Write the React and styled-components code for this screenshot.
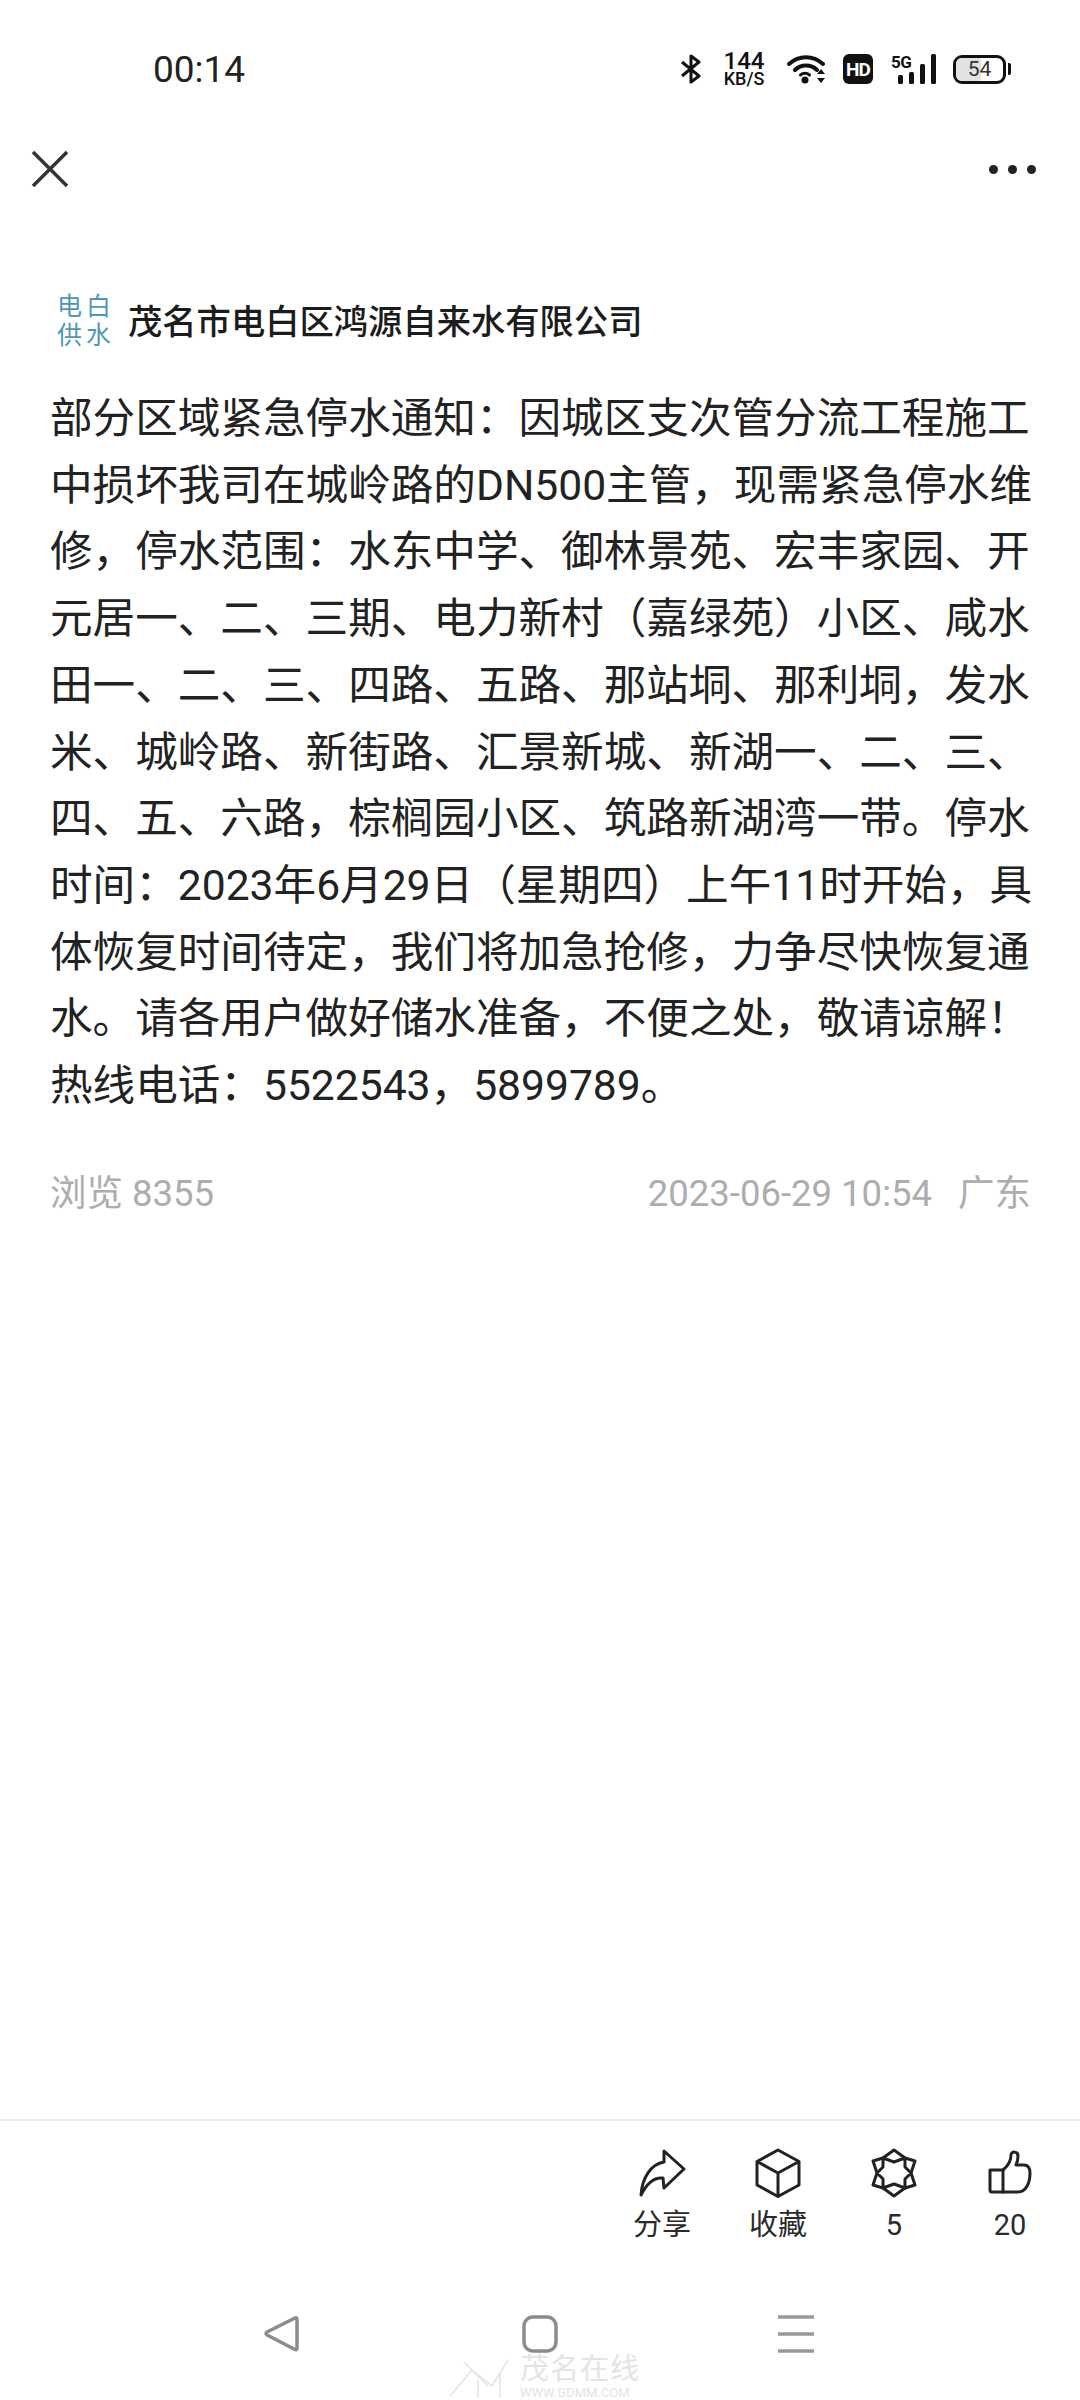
import React from 'react';
import styled, { createGlobalStyle } from 'styled-components';

const GlobalStyle = createGlobalStyle`
  html, body {
    margin: 0;
    padding: 0;
    background: #fff;
  }
  body {
    font-family: Roboto, "Noto Sans CJK SC", sans-serif;
  }
`;

const Page = styled.div`
  width: 1080px;
  height: 2400px;
  display: flex;
  flex-direction: column;
  position: relative;
  overflow: hidden;
  background: #fff;
  color: #222;
`;

const StatusBar = styled.div`
  height: 136px;
  padding: 2px 69px 0 153px;
  display: flex;
  align-items: center;
  justify-content: space-between;
  box-sizing: border-box;
`;

const Clock = styled.span`
  font-size: 37px;
  color: #222;
`;

const StatusIcons = styled.div`
  display: flex;
  align-items: center;
`;

const Speed = styled.div`
  width: 42px;
  margin: 0 22px 0 21px;
  display: flex;
  flex-direction: column;
  align-items: center;
  font-weight: 500;
  color: #111;
`;

const SpeedValue = styled.span`
  font-size: 24px;
  line-height: 20px;
`;

const SpeedUnit = styled.span`
  font-size: 18px;
  line-height: 16px;
  white-space: nowrap;
`;

const HdBadge = styled.span`
  width: 30px;
  height: 30px;
  margin: 0 18px 0 16px;
  border-radius: 6px;
  background: #111;
  color: #fff;
  font-size: 19px;
  font-weight: 700;
  letter-spacing: -1px;
  display: flex;
  align-items: center;
  justify-content: center;
`;

const Signal = styled.div`
  width: 45px;
  height: 30px;
  margin-right: 17px;
  display: flex;
  align-items: flex-start;
`;

const SignalLabel = styled.span`
  width: 0;
  font-size: 17px;
  line-height: 16px;
  font-weight: 700;
  letter-spacing: -0.5px;
  color: #111;
`;

const BatteryWrap = styled.div`
  display: flex;
  align-items: center;
  gap: 2px;
`;

const Battery = styled.div`
  width: 53px;
  height: 29px;
  box-sizing: border-box;
  border: 3px solid #111;
  border-radius: 9px;
  position: relative;
  display: flex;
  align-items: center;
  justify-content: center;
  font-size: 21px;
  color: #333;
  overflow: hidden;
`;

const BatteryFill = styled.div`
  position: absolute;
  left: 0;
  top: 0;
  bottom: 0;
  background: #e2e2e2;
`;

const BatteryLabel = styled.span`
  position: relative;
`;

const BatteryTip = styled.div`
  width: 3px;
  height: 12px;
  background: #111;
  border-radius: 0 2px 2px 0;
`;

const Toolbar = styled.div`
  height: 66px;
  padding: 0 44px 0 31px;
  display: flex;
  align-items: center;
  justify-content: space-between;
`;

const Dots = styled.div`
  display: flex;
  gap: 10px;
`;

const Dot = styled.span`
  width: 9px;
  height: 9px;
  border-radius: 50%;
  background: #222;
`;

const Article = styled.div`
  padding: 87px 49px 0 50px;
  display: flex;
  flex-direction: column;
`;

const Publisher = styled.div`
  display: flex;
  align-items: center;
  gap: 16px;
  padding-left: 7px;
  height: 60px;
`;

const Logo = styled.div`
  width: 55px;
  flex-shrink: 0;
  font-family: "Noto Sans CJK SC", sans-serif;
  font-size: 25px;
  font-weight: 400;
  line-height: 29px;
  letter-spacing: 4px;
  color: #4f97b5;
  white-space: pre;
`;

const PublisherName = styled.span`
  font-family: "Noto Sans CJK SC", sans-serif;
  font-size: 34.3px;
  font-weight: 500;
  color: #1c1c1c;
  white-space: nowrap;
`;

const Body = styled.div`
  margin-top: 36px;
  font-size: 42.6px;
  line-height: 66.7px;
  color: #222;
`;

const BodyLine = styled.div`
  white-space: nowrap;
`;

const Meta = styled.div`
  margin-top: 50px;
  display: flex;
  justify-content: space-between;
  font-size: 36.5px;
  line-height: 50px;
  color: #adadad;
`;

const MetaRight = styled.div`
  display: flex;
  gap: 26px;
`;

const Spacer = styled.div`
  flex: 1;
`;

const ActionBar = styled.div`
  height: 150px;
  border-top: 2px solid #ececec;
  padding: 27px 12px 0 0;
  display: flex;
  justify-content: flex-end;
  box-sizing: border-box;
`;

const Action = styled.div`
  width: 116px;
  display: flex;
  flex-direction: column;
  align-items: center;
  font-size: 29px;
  line-height: 34px;
  color: #2a2a2a;
`;

const ActionIcon = styled.div`
  height: 50px;
  display: flex;
  align-items: center;
  justify-content: center;
  margin-bottom: 10px;
`;

const NavBar = styled.div`
  height: 131px;
  padding: 0 0 1px 263px;
  display: flex;
  align-items: center;
  box-sizing: border-box;
`;

const NavSlot = styled.div`
  width: ${(props) => props.width}px;
  display: flex;
`;

const Watermark = styled.div`
  position: absolute;
  left: 448px;
  top: 2352px;
  display: flex;
  color: #e4e4e4;
`;

const WatermarkText = styled.div`
  margin-left: 10px;
  display: flex;
  flex-direction: column;
`;

const WatermarkTitle = styled.span`
  font-size: 29px;
  line-height: 34px;
  letter-spacing: 1px;
  white-space: nowrap;
`;

const WatermarkUrl = styled.span`
  font-size: 13px;
  line-height: 14px;
  white-space: nowrap;
`;

const bodyLines = [
  '部分区域紧急停水通知\uFF1A因城区支次管分流工程施工',
  '中损坏我司在城岭路的DN500主管\uFF0C现需紧急停水维',
  '修\uFF0C停水范围\uFF1A水东中学、御林景苑、宏丰家园、开',
  '元居一、二、三期、电力新村\uFF08嘉绿苑\uFF09小区、咸水',
  '田一、二、三、四路、五路、那站垌、那利垌\uFF0C发水',
  '米、城岭路、新街路、汇景新城、新湖一、二、三、',
  '四、五、六路\uFF0C棕榈园小区、筑路新湖湾一带。停水',
  '时间\uFF1A2023年6月29日\uFF08星期四\uFF09上午11时开始\uFF0C具',
  '体恢复时间待定\uFF0C我们将加急抢修\uFF0C力争尽快恢复通',
  '水。请各用户做好储水准备\uFF0C不便之处\uFF0C敬请谅解\uFF01',
  '热线电话\uFF1A5522543\uFF0C5899789。',
];

const Line = ({ w = 48, h = 48, children, stroke = '#222', sw = 3 }) => (
  <svg
    width={w}
    height={h}
    viewBox={`0 0 ${w} ${h}`}
    fill="none"
    stroke={stroke}
    strokeWidth={sw}
    strokeLinejoin="round"
    strokeLinecap="round"
  >
    {children}
  </svg>
);

const App = () => {
  return (
    <Page>
      <GlobalStyle />
      <StatusBar>
        <Clock>00:14</Clock>
        <StatusIcons>
          <Line w={22} h={30} stroke="#111" sw={3}>
            <path d="M2 8 L19 22 L11 28 V2 L19 8 L2 22" strokeLinecap="butt" />
          </Line>
          <Speed>
            <SpeedValue>144</SpeedValue>
            <SpeedUnit>KB/S</SpeedUnit>
          </Speed>
          <svg width="40" height="30" viewBox="0 0 40 30" fill="none">
            <path d="M2 10 C12 1 26 1 36 10" stroke="#111" strokeWidth="4" strokeLinecap="round" />
            <path d="M8 16 C14 10 24 10 30 16" stroke="#111" strokeWidth="4" strokeLinecap="round" />
            <circle cx="18" cy="26" r="3.5" fill="#111" />
            <path d="M13.5 21 C16 18.8 20 18.8 22.5 21" stroke="#111" strokeWidth="3" strokeLinecap="round" />
            <path d="M30 20 L34 15 L38 20 Z M30 24 L34 29 L38 24 Z" fill="#111" />
          </svg>
          <HdBadge>HD</HdBadge>
          <Signal>
            <SignalLabel>5G</SignalLabel>
            <svg width="45" height="30" viewBox="0 0 45 30" fill="#111">
              <rect x="7" y="21" width="5" height="9" rx="1.5" />
              <rect x="18" y="18" width="5" height="12" rx="1.5" />
              <rect x="29" y="10" width="5" height="20" rx="1.5" />
              <rect x="40" y="0" width="5" height="30" rx="1.5" />
            </svg>
          </Signal>
          <BatteryWrap>
            <Battery>
              <BatteryFill style={{ width: '54%' }} />
              <BatteryLabel>54</BatteryLabel>
            </Battery>
            <BatteryTip />
          </BatteryWrap>
        </StatusIcons>
      </StatusBar>

      <Toolbar>
        <Line w={38} h={38} stroke="#333" sw={3.5}>
          <path d="M2 2 L36 36 M36 2 L2 36" strokeLinecap="butt" />
        </Line>
        <Dots>
          <Dot />
          <Dot />
          <Dot />
        </Dots>
      </Toolbar>

      <Article>
        <Publisher>
          <Logo>{'电白\n供水'}</Logo>
          <PublisherName>茂名市电白区鸿源自来水有限公司</PublisherName>
        </Publisher>
        <Body>
          {bodyLines.map((text) => (
            <BodyLine key={text}>{text}</BodyLine>
          ))}
        </Body>
        <Meta>
          <span>浏览 8355</span>
          <MetaRight>
            <span>2023-06-29 10:54</span>
            <span>广东</span>
          </MetaRight>
        </Meta>
      </Article>

      <Spacer />

      <ActionBar>
        <Action>
          <ActionIcon>
            <Line w={48} h={48}>
              <path d="M3 46 C4 29 13 15 26 13 L26 2 L46 20 L26 39 L25 29 C16 28 9 34 3 46 Z" />
            </Line>
          </ActionIcon>
          分享
        </Action>
        <Action>
          <ActionIcon>
            <Line w={46} h={50}>
              <path d="M23 2 L44 13.5 V37 L23 48.5 L2 37 V13.5 Z M2 13.5 L23 25 L44 13.5 M23 25 V48.5" />
            </Line>
          </ActionIcon>
          收藏
        </Action>
        <Action>
          <ActionIcon>
            <Line w={46} h={50}>
              <path d="M23 2 L34 10 L44 13 L40 25 L44 37 L34 40 L23 48 L12 40 L2 37 L6 25 L2 13 L12 10 Z" />
              <path d="M12 10 L23 14 L34 10 L34 19 L40 25 L34 31 L34 40 L23 36 L12 40 L12 31 L6 25 L12 19 Z" />
            </Line>
          </ActionIcon>
          5
        </Action>
        <Action>
          <ActionIcon>
            <Line w={44} h={46}>
              <path d="M2 20 H15 V42 H4 Q2 42 2 40 Z" />
              <path d="M15 20 C21 15 23 10 23 5 C23 1 30 1 30 6 C30 10 29 13 28 15 H36 C41 15 42 19 42 23 C42 33 38 42 30 42 H15" />
            </Line>
          </ActionIcon>
          20
        </Action>
      </ActionBar>

      <NavBar>
        <NavSlot width={259}>
          <Line w={36} h={38} stroke="#8c8c8c" sw={3.5}>
            <path d="M32 3 Q34 2 34 5 V33 Q34 36 31 34 L4 20 Q2 19 4 17 Z" />
          </Line>
        </NavSlot>
        <NavSlot width={255}>
          <Line w={36} h={38} stroke="#8c8c8c" sw={3.5}>
            <rect x="2" y="2" width="32" height="34" rx="9" />
          </Line>
        </NavSlot>
        <NavSlot width={40}>
          <Line w={38} h={38} stroke="#999" sw={3.5}>
            <path d="M1 2 H37 M1 19 H37 M1 36 H37" strokeLinecap="butt" />
          </Line>
        </NavSlot>
      </NavBar>

      <Watermark>
        <Line w={62} h={46} stroke="#e4e4e4" sw={1.5}>
          <path d="M2 44 L24 18 L44 34 L60 8 M16 10 L40 34 M30 28 V46 M52 22 V46" />
        </Line>
        <WatermarkText>
          <WatermarkTitle>茂名在线</WatermarkTitle>
          <WatermarkUrl>WWW.GDMM.COM</WatermarkUrl>
        </WatermarkText>
      </Watermark>
    </Page>
  );
};

export default App;
